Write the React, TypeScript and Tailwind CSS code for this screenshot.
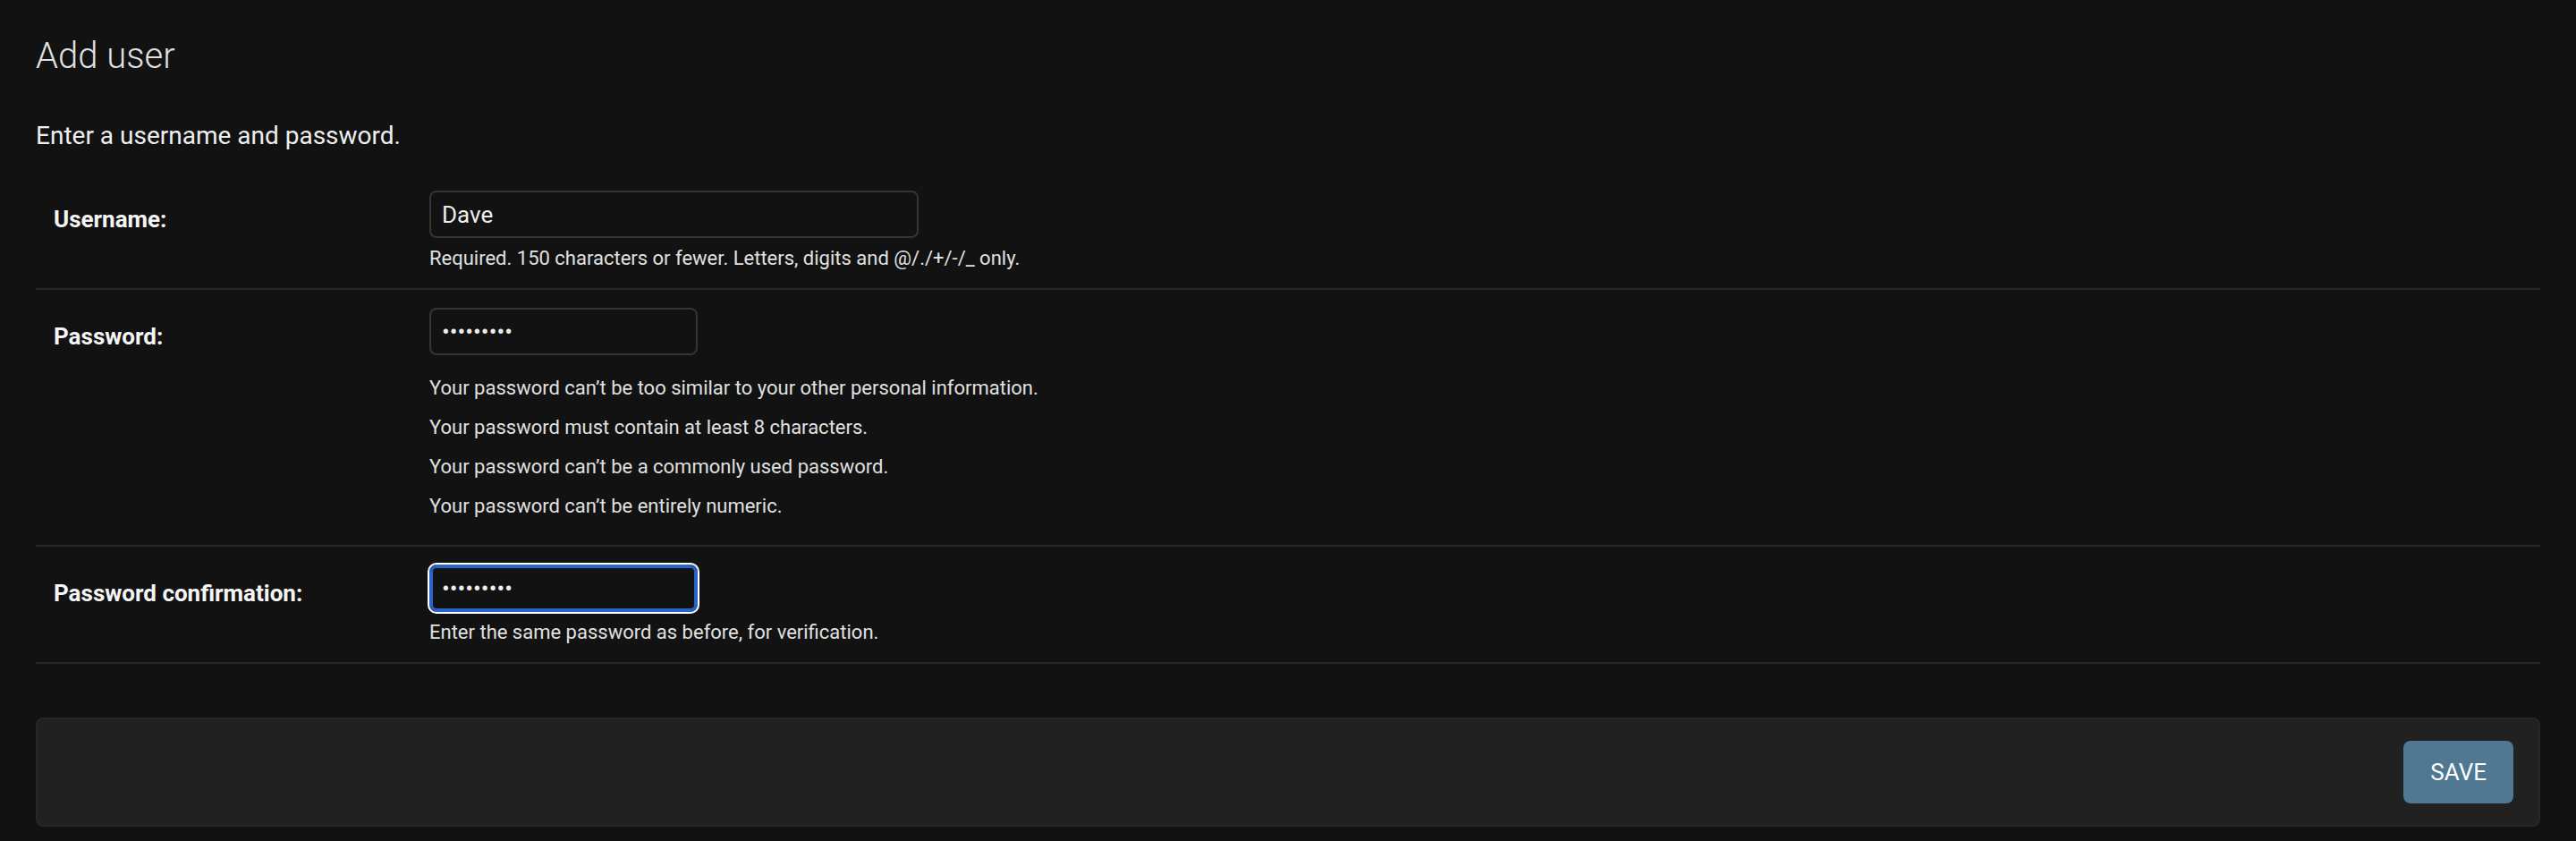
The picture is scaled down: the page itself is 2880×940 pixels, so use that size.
import type { ReactNode } from 'react'

const passwordHelp = [
  'Your password can’t be too similar to your other personal information.',
  'Your password must contain at least 8 characters.',
  'Your password can’t be a commonly used password.',
  'Your password can’t be entirely numeric.',
]

function FormRow({ label, children }: { label: string; children: ReactNode }) {
  return (
    <div className="flex border-b-2 border-[#272727] p-5">
      <label className="w-[420px] shrink-0 pt-[14px] text-[26px] leading-[36px] font-bold text-[#f5f5f5]">
        {label}
      </label>
      <div className="flex flex-col">{children}</div>
    </div>
  )
}

function Help({ children }: { children: ReactNode }) {
  return <div className="mt-[10px] text-[22px] leading-[26px] text-[#e0e0e0]">{children}</div>
}

export default function App() {
  return (
    <div className="min-h-screen bg-[#121212] px-10 pt-[39px] font-['Roboto','Liberation_Sans',sans-serif]">
      <h1 className="text-[40px] leading-[48px] font-light text-[#e0e0e0]">Add user</h1>
      <p className="mt-[47px] text-[28px] leading-[36px] text-[#eeeeee]">
        Enter a username and password.
      </p>

      <form className="mt-[23px]" onSubmit={(e) => e.preventDefault()}>
        <FormRow label="Username:">
          <input
            type="text"
            defaultValue="Dave"
            className="h-[53px] w-[547px] rounded-lg border-2 border-[#353535] bg-[#121212] px-3 text-[26px] text-[#eeeeee] outline-none"
          />
          <Help>Required. 150 characters or fewer. Letters, digits and @/./+/-/_ only.</Help>
        </FormRow>

        <FormRow label="Password:">
          <input
            type="password"
            defaultValue="secret123"
            className="h-[53px] w-[300px] rounded-lg border-2 border-[#353535] bg-[#121212] px-3 text-[26px] text-[#eeeeee] outline-none"
          />
          <ul className="mt-[24px] mb-[10px] flex flex-col gap-[18px] text-[22px] leading-[26px] text-[#e0e0e0]">
            {passwordHelp.map((line) => (
              <li key={line}>{line}</li>
            ))}
          </ul>
        </FormRow>

        <FormRow label="Password confirmation:">
          <input
            type="password"
            defaultValue="secret123"
            className="h-[53px] w-[300px] rounded-lg border-2 border-[#2b63c9] bg-[#121212] px-3 text-[26px] text-[#eeeeee] shadow-[inset_0_0_0_2px_#2b63c9] outline-2 outline-white"
          />
          <Help>Enter the same password as before, for verification.</Help>
        </FormRow>

        <div className="mt-[60px] flex justify-end rounded-lg border-2 border-[#272727] bg-[#212121] py-6 pr-7">
          <button
            type="submit"
            className="h-[70px] rounded-lg bg-[#517892] px-[30px] text-[26px] text-white"
          >
            SAVE
          </button>
        </div>
      </form>
    </div>
  )
}
